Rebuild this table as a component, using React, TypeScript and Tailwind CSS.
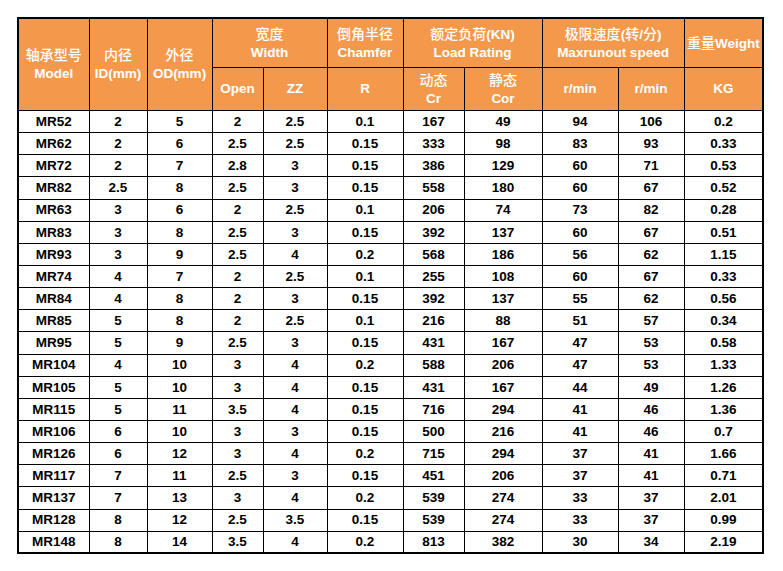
const rows: string[][] = [
  ['MR52', '2', '5', '2', '2.5', '0.1', '167', '49', '94', '106', '0.2'],
  ['MR62', '2', '6', '2.5', '2.5', '0.15', '333', '98', '83', '93', '0.33'],
  ['MR72', '2', '7', '2.8', '3', '0.15', '386', '129', '60', '71', '0.53'],
  ['MR82', '2.5', '8', '2.5', '3', '0.15', '558', '180', '60', '67', '0.52'],
  ['MR63', '3', '6', '2', '2.5', '0.1', '206', '74', '73', '82', '0.28'],
  ['MR83', '3', '8', '2.5', '3', '0.15', '392', '137', '60', '67', '0.51'],
  ['MR93', '3', '9', '2.5', '4', '0.2', '568', '186', '56', '62', '1.15'],
  ['MR74', '4', '7', '2', '2.5', '0.1', '255', '108', '60', '67', '0.33'],
  ['MR84', '4', '8', '2', '3', '0.15', '392', '137', '55', '62', '0.56'],
  ['MR85', '5', '8', '2', '2.5', '0.1', '216', '88', '51', '57', '0.34'],
  ['MR95', '5', '9', '2.5', '3', '0.15', '431', '167', '47', '53', '0.58'],
  ['MR104', '4', '10', '3', '4', '0.2', '588', '206', '47', '53', '1.33'],
  ['MR105', '5', '10', '3', '4', '0.15', '431', '167', '44', '49', '1.26'],
  ['MR115', '5', '11', '3.5', '4', '0.15', '716', '294', '41', '46', '1.36'],
  ['MR106', '6', '10', '3', '3', '0.15', '500', '216', '41', '46', '0.7'],
  ['MR126', '6', '12', '3', '4', '0.2', '715', '294', '37', '41', '1.66'],
  ['MR117', '7', '11', '2.5', '3', '0.15', '451', '206', '37', '41', '0.71'],
  ['MR137', '7', '13', '3', '4', '0.2', '539', '274', '33', '37', '2.01'],
  ['MR128', '8', '12', '2.5', '3.5', '0.15', '539', '274', '33', '37', '0.99'],
  ['MR148', '8', '14', '3.5', '4', '0.2', '813', '382', '30', '34', '2.19'],
]

// chinese part of a header label
function Cn({ children }: { children: string }) {
  return <span className="text-[14px] font-medium">{children}</span>
}

function Line({ children }: { children: React.ReactNode }) {
  return <span className="block leading-[18px]">{children}</span>
}

const th = 'border border-black bg-[#f4994c] text-center align-middle text-white font-bold p-0'
const td = 'border border-black text-center align-middle p-0 h-[22.15px] leading-none'

export default function App() {
  return (
    <div className="min-h-[571px] w-[783px] bg-white pl-[17px] pt-[17px] font-['Liberation_Sans','Noto_Sans_CJK_SC',sans-serif] text-[13.5px]">
      <table className="w-[745px] table-fixed border-collapse border-2 border-black">
        <colgroup>
          <col className="w-[71px]" />
          <col className="w-[58px]" />
          <col className="w-[65px]" />
          <col className="w-[51px]" />
          <col className="w-[64px]" />
          <col className="w-[76px]" />
          <col className="w-[61px]" />
          <col className="w-[78px]" />
          <col className="w-[76px]" />
          <col className="w-[66px]" />
          <col className="w-[79px]" />
        </colgroup>
        <thead>
          <tr className="h-[49.5px]">
            <th rowSpan={2} className={th}>
              <Line><Cn>轴承型号</Cn></Line>
              <Line>Model</Line>
            </th>
            <th rowSpan={2} className={th}>
              <Line><Cn>内径</Cn></Line>
              <Line>ID(mm)</Line>
            </th>
            <th rowSpan={2} className={th}>
              <Line><Cn>外径</Cn></Line>
              <Line>OD(mm)</Line>
            </th>
            <th colSpan={2} className={th}>
              <Line><Cn>宽度</Cn></Line>
              <Line>Width</Line>
            </th>
            <th className={th}>
              <Line><Cn>倒角半径</Cn></Line>
              <Line>Chamfer</Line>
            </th>
            <th colSpan={2} className={th}>
              <Line><Cn>额定负荷</Cn>(KN)</Line>
              <Line>Load Rating</Line>
            </th>
            <th colSpan={2} className={th}>
              <Line>
                <Cn>极限速度</Cn>(<Cn>转</Cn>/<Cn>分</Cn>)
              </Line>
              <Line>Maxrunout speed</Line>
            </th>
            <th className={th}>
              <Line><Cn>重量</Cn>Weight</Line>
            </th>
          </tr>
          <tr className="h-[43px]">
            <th className={th}>Open</th>
            <th className={th}>ZZ</th>
            <th className={th}>R</th>
            <th className={th}>
              <Line><Cn>动态</Cn></Line>
              <Line>Cr</Line>
            </th>
            <th className={th}>
              <Line><Cn>静态</Cn></Line>
              <Line>Cor</Line>
            </th>
            <th className={th}>r/min</th>
            <th className={th}>r/min</th>
            <th className={th}>KG</th>
          </tr>
        </thead>
        <tbody className="font-bold text-black">
          {rows.map((r) => (
            <tr key={r[0]}>
              {r.map((v, i) => (
                <td key={i} className={td}>
                  {v}
                </td>
              ))}
            </tr>
          ))}
        </tbody>
      </table>
    </div>
  )
}
